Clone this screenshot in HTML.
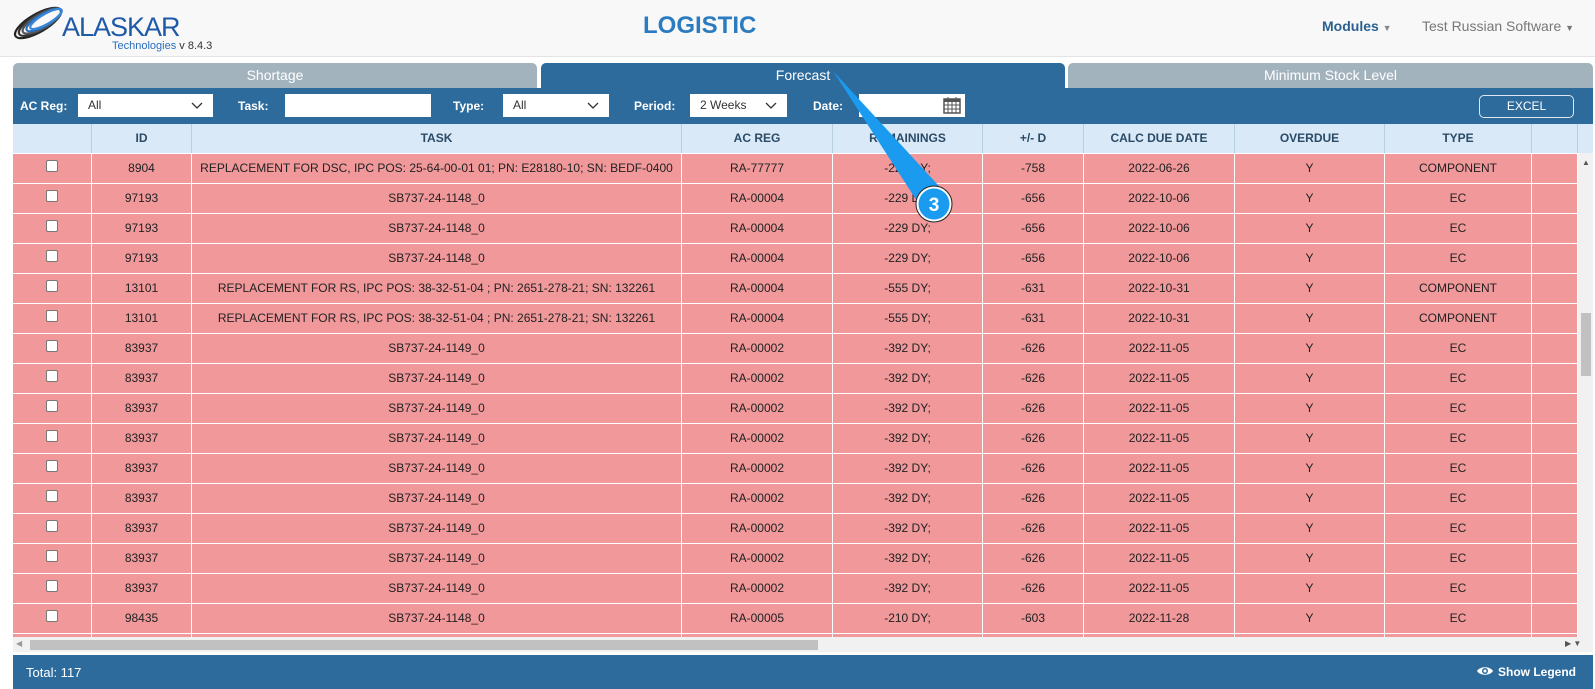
<!DOCTYPE html>
<html><head><meta charset="utf-8"><style>
*{box-sizing:border-box;margin:0;padding:0}
body{width:1595px;height:689px;background:#fff;font-family:"Liberation Sans",Arial,sans-serif;position:relative;overflow:hidden;color:#333}
.a{position:absolute}
.hdr{left:0;top:0;width:1595px;height:57px;background:#f8f8f8;border-bottom:1px solid #e4e4e4}
.tab{top:63px;height:25px;color:#fff;font-size:14px;text-align:center;line-height:25px;border-radius:5px 5px 0 0}
.fb{left:13px;top:88px;width:1580px;height:36px;background:#2d6b9c}
.lbl{color:#fff;font-weight:bold;font-size:12px;top:99px}
.inp{background:#fff;top:94px;height:23px;font-size:12px;line-height:23px;padding-left:10px}
.chev{position:absolute;right:10px;top:8px}
.th{top:124px;height:29px;background:#d9e9f7;border-right:1px solid #b8cfe2;font-size:12px;font-weight:bold;color:#2b4a66;text-align:center;line-height:29px}
.row{left:13px;width:1565px;height:30px;background:#f0989a;border-bottom:1px solid #fff}
.c{position:absolute;top:0;height:29px;line-height:29px;text-align:center;font-size:12px;color:#222;border-right:1px solid #fff;white-space:nowrap;overflow:hidden}
.cb{display:inline-block;width:12px;height:12px;background:#fff;border:1px solid #777;border-radius:2px;vertical-align:middle;margin-top:-6px}
</style></head><body>
<div class="a hdr"></div>
<svg class="a" style="left:10px;top:4px" width="56" height="38" viewBox="0 0 56 38">
<g fill="none" stroke-width="2.2">
<ellipse cx="28" cy="19" rx="26" ry="9" transform="rotate(-30 28 19)" stroke="#222"/>
<ellipse cx="30" cy="18" rx="24" ry="8" transform="rotate(-30 30 18)" stroke="#333"/>
<ellipse cx="32" cy="17" rx="22" ry="7" transform="rotate(-30 32 17)" stroke="#555"/>
<ellipse cx="34" cy="16" rx="20" ry="6" transform="rotate(-30 34 16)" stroke="#2a6fbf"/>
<ellipse cx="36" cy="15" rx="18" ry="5" transform="rotate(-30 36 15)" stroke="#3a86d6"/>
</g></svg>
<div class="a" style="left:62px;top:12px;font-size:27px;color:#1e5aa8;letter-spacing:-1px">ALASKAR</div>
<div class="a" style="left:112px;top:40px;font-size:11px;color:#2a6fbf">Technologies <span style="color:#333">v 8.4.3</span></div>
<div class="a" style="left:643px;top:12px;font-size:24px;font-weight:bold;color:#2a7bbf">LOGISTIC</div>
<div class="a" style="left:1322px;top:18px;font-size:14px;font-weight:bold;color:#2a5f8f">Modules <span style="font-size:9px;color:#888">▼</span></div>
<div class="a" style="left:1422px;top:18px;font-size:14px;color:#777">Test Russian Software <span style="font-size:9px">▼</span></div>

<div class="a tab" style="left:13px;width:524px;background:#a3b3be">Shortage</div>
<div class="a tab" style="left:541px;width:524px;background:#2d6b9c">Forecast</div>
<div class="a tab" style="left:1068px;width:525px;background:#a3b3be">Minimum Stock Level</div>

<div class="a fb"></div>
<div class="a lbl" style="left:20px">AC Reg:</div>
<div class="a inp" style="left:78px;width:135px">All<svg class="chev" width="12" height="7" viewBox="0 0 12 7"><path d="M1 1l5 5 5-5" fill="none" stroke="#333" stroke-width="1.3"/></svg></div>
<div class="a lbl" style="left:238px">Task:</div>
<div class="a inp" style="left:285px;width:146px"></div>
<div class="a lbl" style="left:453px">Type:</div>
<div class="a inp" style="left:503px;width:106px">All<svg class="chev" width="12" height="7" viewBox="0 0 12 7"><path d="M1 1l5 5 5-5" fill="none" stroke="#333" stroke-width="1.3"/></svg></div>
<div class="a lbl" style="left:634px">Period:</div>
<div class="a inp" style="left:690px;width:97px">2 Weeks<svg class="chev" width="12" height="7" viewBox="0 0 12 7"><path d="M1 1l5 5 5-5" fill="none" stroke="#333" stroke-width="1.3"/></svg></div>
<div class="a lbl" style="left:813px">Date:</div>
<div class="a inp" style="left:859px;width:106px"><svg style="position:absolute;right:4px;top:2px" width="18" height="18" viewBox="0 0 18 18"><rect x="1" y="3" width="16" height="14" fill="#fff" stroke="#555" stroke-width="1.5"/><rect x="1" y="3" width="16" height="3" fill="#555"/><path d="M5 1v4M13 1v4M1 9h16M1 13h16M5 6v11M9 6v11M13 6v11" stroke="#555" stroke-width="1"/></svg></div>
<div class="a" style="left:1479px;top:95px;width:95px;height:23px;border:1px solid #dfe8f0;border-radius:5px;color:#fff;font-size:12px;text-align:center;line-height:21px">EXCEL</div>

<div class="a th" style="left:13px;width:79px"></div>
<div class="a th" style="left:92px;width:100px">ID</div>
<div class="a th" style="left:192px;width:490px">TASK</div>
<div class="a th" style="left:682px;width:151px">AC REG</div>
<div class="a th" style="left:833px;width:150px">REMAININGS</div>
<div class="a th" style="left:983px;width:101px">+/- D</div>
<div class="a th" style="left:1084px;width:151px">CALC DUE DATE</div>
<div class="a th" style="left:1235px;width:150px">OVERDUE</div>
<div class="a th" style="left:1385px;width:147px">TYPE</div>
<div class="a th" style="left:1532px;width:46px"></div>
<div class="a" style="left:1578px;top:124px;width:15px;height:29px;background:#d9e9f7"></div>

<div class="a" style="left:13px;top:154px;width:1565px;height:483px;overflow:hidden">
<div id="rows"></div>
</div>
<div class="a" style="left:1578px;top:153px;width:15px;height:484px;background:#f1f1f1"></div>
<div class="a" style="left:1581px;top:313px;width:10px;height:63px;background:#c1c1c1"></div>
<div class="a" style="left:1582px;top:158px;font-size:8px;color:#555">▲</div>
<div class="a" style="left:13px;top:637px;width:1580px;height:15px;background:#f1f1f1"></div>
<div class="a" style="left:30px;top:640px;width:788px;height:10px;background:#c1c1c1"></div>
<div class="a" style="left:16px;top:639px;font-size:8px;color:#999">◀</div>
<div class="a" style="left:1565px;top:639px;font-size:8px;color:#555">▶ ▼</div>

<div class="a" style="left:13px;top:655px;width:1580px;height:34px;background:#2d6b9c"></div>
<div class="a" style="left:26px;top:665px;color:#fff;font-size:13px">Total: 117</div>
<div class="a" style="left:1476px;top:665px;color:#fff;font-size:12px;font-weight:bold"><svg width="18" height="12" viewBox="0 0 18 12" style="vertical-align:-1px;margin-right:4px"><path d="M1 6C4 1 14 1 17 6C14 11 4 11 1 6Z" fill="#fff"/><circle cx="9" cy="6" r="3" fill="#2d6b9c"/><circle cx="9" cy="6" r="1.5" fill="#fff"/></svg>Show Legend</div>

<svg class="a" style="left:0;top:0" width="1595" height="689">
<path d="M833 71 L950 198 L926 215 Z" fill="#1a9bf0"/>
<circle cx="934" cy="204" r="18" fill="#fff" stroke="#222" stroke-width="1"/>
<circle cx="934" cy="204" r="15.5" fill="#1a9bf0"/>
<text x="934" y="211" fill="#fff" font-family="Liberation Sans" font-weight="bold" font-size="19" text-anchor="middle">3</text>
</svg>

<script>
var d=[["8904","REPLACEMENT FOR DSC, IPC POS: 25-64-00-01 01; PN: E28180-10; SN: BEDF-0400","RA-77777","-229 DY;","-758","2022-06-26","COMPONENT"],
["97193","SB737-24-1148_0","RA-00004","-229 DY;","-656","2022-10-06","EC"],
["97193","SB737-24-1148_0","RA-00004","-229 DY;","-656","2022-10-06","EC"],
["97193","SB737-24-1148_0","RA-00004","-229 DY;","-656","2022-10-06","EC"],
["13101","REPLACEMENT FOR RS, IPC POS: 38-32-51-04 ; PN: 2651-278-21; SN: 132261","RA-00004","-555 DY;","-631","2022-10-31","COMPONENT"],
["13101","REPLACEMENT FOR RS, IPC POS: 38-32-51-04 ; PN: 2651-278-21; SN: 132261","RA-00004","-555 DY;","-631","2022-10-31","COMPONENT"]];
for(var i=0;i<9;i++)d.push(["83937","SB737-24-1149_0","RA-00002","-392 DY;","-626","2022-11-05","EC"]);
d.push(["98435","SB737-24-1148_0","RA-00005","-210 DY;","-603","2022-11-28","EC"]);
d.push(["","","","","","",""]);
var cols=[[0,79],[79,100],[179,490],[669,151],[820,150],[970,101],[1071,151],[1222,150],[1372,147],[1519,46]];
var h="";
d.forEach(function(r,i){
 h+='<div class="row a" style="left:0;top:'+(i*30)+'px">';
 var v=['<span class="cb"></span>',r[0],r[1],r[2],r[3],r[4],r[5],r[6]?"Y":"",r[6],""];
 cols.forEach(function(c,j){h+='<div class="c" style="left:'+c[0]+'px;width:'+c[1]+'px">'+v[j]+'</div>';});
 h+='</div>';
});
document.getElementById("rows").innerHTML=h;
</script>
</body></html>
